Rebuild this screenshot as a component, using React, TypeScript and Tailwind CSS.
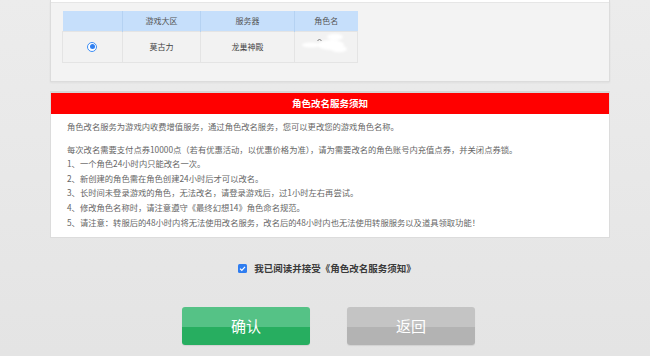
import React from "react";

const font = { fontFamily: '"Noto Sans CJK SC", "Noto Sans", sans-serif' };

function Radio() {
  return (
    <div className="w-[10px] h-[10px] rounded-full border border-[#3d8ef5] bg-white flex items-center justify-center">
      <div className="w-[5px] h-[5px] rounded-full bg-[#2f7ff0]" />
    </div>
  );
}

function Censor() {
  return (
    <svg width="48" height="22" viewBox="0 0 48 22" className="block">
      <defs>
        <filter id="bl" x="-30%" y="-60%" width="160%" height="220%">
          <feGaussianBlur stdDeviation="1.1" />
        </filter>
      </defs>
      <g filter="url(#bl)" fill="#ffffff">
        <ellipse cx="10" cy="13" rx="9" ry="2.5" />
        <ellipse cx="30" cy="13" rx="13" ry="5" />
        <ellipse cx="34" cy="5" rx="8" ry="3.2" />
        <ellipse cx="38" cy="17" rx="8" ry="3.2" />
      </g>
      <path d="M16.5 9 L18.5 7 L20.5 9" stroke="#777" strokeWidth="1" fill="none" />
    </svg>
  );
}

const lines = [
  "1、一个角色24小时内只能改名一次。",
  "2、新创建的角色需在角色创建24小时后才可以改名。",
  "3、长时间未登录游戏的角色，无法改名，请登录游戏后，过1小时左右再尝试。",
  "4、修改角色名称时，请注意遵守《最终幻想14》角色命名规范。",
  "5、请注意：转服后的48小时内将无法使用改名服务，改名后的48小时内也无法使用转服服务以及道具领取功能！",
];

export default function App() {
  return (
    <div
      className="w-[650px] h-[356px] overflow-hidden bg-gradient-to-b from-[#ececec] to-[#e4e4e4]"
      style={font}
    >
      <div className="ml-[50px] w-[560px] flex flex-col">
        {/* top panel */}
        <div className="bg-[#f3f3f3] border-x border-b border-[#dcdcdc] shadow-[0_1px_2px_rgba(0,0,0,0.05)]">
          <div className="h-[3px] bg-white border-b border-[#e6e6e6]" />
          <div className="pt-[8px] pb-[18px] pl-[11px]">
            <table className="border-collapse text-[8px] text-[#555]">
              <thead>
                <tr className="bg-[#c6dffb] h-[20px]">
                  <th className="w-[60px] font-normal border-r border-[#b5d2f2]"></th>
                  <th className="w-[78px] font-normal border-r border-[#b5d2f2]">游戏大区</th>
                  <th className="w-[94px] font-normal border-r border-[#b5d2f2]">服务器</th>
                  <th className="w-[63px] font-normal">角色名</th>
                </tr>
              </thead>
              <tbody>
                <tr className="h-[31px] bg-[#f2f2f2]">
                  <td className="border border-[#e4e4e4]">
                    <div className="flex justify-center pr-[1px]">
                      <Radio />
                    </div>
                  </td>
                  <td className="border border-[#e4e4e4] text-center text-[#444]">莫古力</td>
                  <td className="border border-[#e4e4e4] text-center text-[#444]">龙巢神殿</td>
                  <td className="border border-[#e4e4e4]">
                    <div className="flex justify-start pl-[6px] -mt-[7px]">
                      <Censor />
                    </div>
                  </td>
                </tr>
              </tbody>
            </table>
          </div>
        </div>

        {/* notice panel */}
        <div className="mt-[9px] bg-white border-x border-b border-[#dcdcdc] border-t-[2px] border-t-[#d6d6d6]">
          <div className="h-[21px] bg-[#ff0000] flex items-center justify-center text-white text-[9.5px] font-bold">
            角色改名服务须知
          </div>
          <div className="pl-[16px] pr-[10px] pt-[5px] pb-[8px] text-[8.3px] leading-[14.6px] text-[#666]">
            <p className="mb-[8.5px]">
              角色改名服务为游戏内收费增值服务，通过角色改名服务，您可以更改您的游戏角色名称。
            </p>
            <p>
              每次改名需要支付点券10000点（若有优惠活动，以优惠价格为准），请为需要改名的角色账号内充值点券，并关闭点券锁。
            </p>
            {lines.map((l) => (
              <p key={l}>{l}</p>
            ))}
          </div>
        </div>

        {/* agreement */}
        <div className="mt-[23px] h-[14px] flex items-center justify-center pr-[6px] gap-[7px]">
          <div className="w-[9px] h-[9px] rounded-[1.5px] bg-[#2f7df0] flex items-center justify-center">
            <svg width="7" height="7" viewBox="0 0 7 7">
              <path d="M1 3.6 L2.8 5.3 L6 1.8" stroke="#fff" strokeWidth="1.2" fill="none" />
            </svg>
          </div>
          <span className="text-[9.5px] font-bold text-[#3a3a3a]">我已阅读并接受《角色改名服务须知》</span>
        </div>

        {/* buttons */}
        <div className="mt-[32px] flex justify-center gap-[37px] pr-[3px]">
          <button className="w-[128px] h-[38px] rounded-[3px] bg-[linear-gradient(to_bottom,#55c286_0%,#55c286_52%,#27ae60_52%,#27ae60_100%)] text-white text-[15px] shadow-[0_1px_1px_rgba(0,0,0,0.08)]">
            确认
          </button>
          <button className="w-[128px] h-[38px] rounded-[3px] bg-[linear-gradient(to_bottom,#c4c4c4_0%,#c4c4c4_52%,#b3b3b3_52%,#b3b3b3_100%)] text-white text-[15px] shadow-[0_1px_1px_rgba(0,0,0,0.08)]">
            返回
          </button>
        </div>
      </div>
    </div>
  );
}
